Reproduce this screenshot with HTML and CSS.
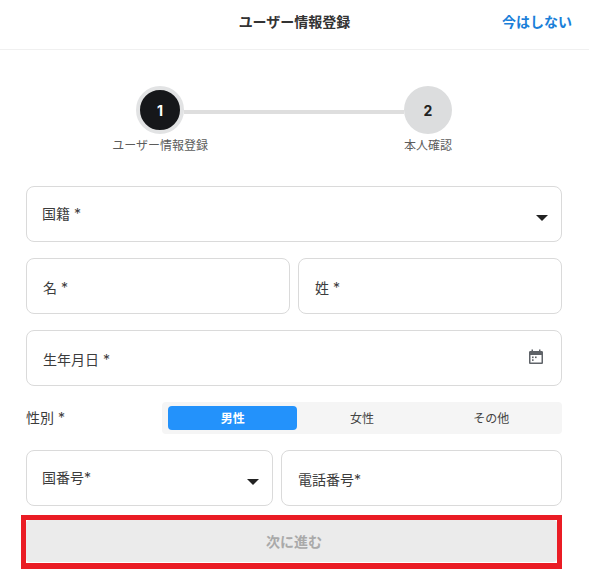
FILE: index.html
```html
<!DOCTYPE html>
<html lang="ja">
<head>
    <meta charset="UTF-8">
    <meta name="viewport" content="width=device-width, initial-scale=1.0">
    <title>ユーザー情報登録</title>
    <link rel="stylesheet" href="styles.css">
</head>
<body>
    <header class="topbar">
        <h1>ユーザー情報登録</h1>
        <a class="skip" href="#">今はしない</a>
    </header>

    <div class="stepper">
        <div class="step active">
            <span class="step-num">1</span>
            <span class="step-label">ユーザー情報登録</span>
        </div>
        <div class="step-line"></div>
        <div class="step">
            <span class="step-num">2</span>
            <span class="step-label">本人確認</span>
        </div>
    </div>

    <form class="form">
        <div class="field select">
            <span class="field-label">国籍 *</span>
            <span class="arrow"></span>
        </div>
        <div class="row names">
            <div class="field"><span class="field-label">名 *</span></div>
            <div class="field"><span class="field-label">姓 *</span></div>
        </div>
        <div class="field date">
            <span class="field-label">生年月日 *</span>
            <svg class="calendar" viewBox="0 0 16 16" width="16" height="16">
                <path fill="#5f6368" d="M3.5 0.5h1.5v1.5h6v-1.5h1.5v1.500h1.200c0.700 0 1.300 0.600 1.300 1.300v10.400c0 0.700-0.600 1.300-1.300 1.300H2.300c-0.700 0-1.300-0.600-1.300-1.300V3.300C1 2.600 1.600 2 2.300 2h1.200z"/>
                <rect x="2.500" y="6" width="11" height="7.500" fill="#fff"/>
                <rect x="4" y="7.500" width="1.600" height="1.600" fill="#5f6368"/>
                <rect x="7" y="7.500" width="1.600" height="1.600" fill="#5f6368"/>
                <rect x="4" y="10.300" width="1.600" height="1.600" fill="#5f6368"/>
            </svg>
        </div>
        <div class="gender">
            <span class="gender-label">性別 *</span>
            <div class="toggle">
                <button type="button" class="toggle-item on">男性</button>
                <button type="button" class="toggle-item">女性</button>
                <button type="button" class="toggle-item">その他</button>
            </div>
        </div>
        <div class="row phone">
            <div class="field select">
                <span class="field-label">国番号*</span>
                <span class="arrow"></span>
            </div>
            <div class="field tel"><span class="field-label">電話番号*</span></div>
        </div>
        <div class="next-frame">
            <button type="button" class="next" disabled>次に進む</button>
        </div>
    </form>
</body>
</html>
```

FILE: styles.css
```css
* {
    box-sizing: border-box;
}
body {
    margin: 0;
    background: #fff;
    color: #3c3c3c;
    font-family: Inter, "Noto Sans CJK JP", sans-serif;
    font-size: 14px;
}
.topbar {
    position: relative;
    height: 50px;
    padding: 0 17px 7px 0;
    display: flex;
    align-items: center;
    justify-content: flex-end;
    border-bottom: 1px solid #f0f0f0;
}
.topbar h1 {
    position: absolute;
    left: 0;
    right: 0;
    top: 12px;
    margin: 0;
    text-align: center;
    font-size: 14px;
    line-height: 20px;
    font-weight: 700;
    color: #333;
}
.skip {
    position: relative;
    color: #1a7fd9;
    font-weight: 700;
    text-decoration: none;
}
.stepper {
    display: flex;
    margin: 36px 0 0 136px;
    width: 316px;
}
.step {
    width: 48px;
    display: flex;
    flex-direction: column;
    align-items: center;
}
.step-num {
    width: 48px;
    height: 48px;
    border-radius: 50%;
    background: #dcddde;
    color: #222;
    font-size: 14px;
    font-weight: 700;
    display: flex;
    align-items: center;
    justify-content: center;
}
.step.active .step-num {
    background: #16171a;
    color: #fff;
    border: 4px solid #e2e3e4;
}
.step-label {
    margin-top: 3px;
    font-size: 12px;
    line-height: 18px;
    color: #5c5c5c;
    white-space: nowrap;
}
.step-line {
    flex: 1;
    height: 4px;
    margin-top: 24px;
    background: #dedede;
}
.form {
    margin: 31px 27px 0 26px;
    display: flex;
    flex-direction: column;
    gap: 16px;
}
.field {
    height: 56px;
    padding: 0 14px 0 16px;
    display: flex;
    align-items: center;
    justify-content: space-between;
    border: 1px solid #dadada;
    border-radius: 8px;
}
.field-label {
    line-height: 20px;
    margin-top: 4px;
}
.select {
    padding-left: 15px;
}
.select .field-label {
    margin-top: 0;
}
.arrow {
    width: 0;
    height: 0;
    margin-top: 8px;
    border-left: 6px solid transparent;
    border-right: 6px solid transparent;
    border-top: 6px solid #222;
    margin-right: -1px;
}
.row {
    display: flex;
    gap: 8px;
}
.row .field {
    flex: 1;
}
.row .select {
    flex: 0 0 247px;
}
.calendar {
    margin-right: 3px;
    margin-top: -3px;
}
.gender {
    display: flex;
    align-items: center;
}
.gender-label {
    width: 136px;
    margin-top: -2px;
}
.toggle {
    flex: 1;
    display: grid;
    grid-template-columns: repeat(3, 1fr);
    height: 32px;
    padding: 4px 6px;
    background: #f5f5f5;
    border-radius: 4px;
}
.toggle-item {
    padding: 0 0 2px;
    border: none;
    border-radius: 4px;
    background: none;
    color: #444;
    font: inherit;
    font-size: 12px;
}
.toggle-item.on {
    background: #2392fb;
    color: #fff;
    font-weight: 700;
}
.next-frame {
    margin: -7px 0 0 -5px;
    height: 54px;
    border: 5px solid #ea1c24;
    border-bottom-width: 6px;
    background: #fff;
}
.next {
    display: block;
    width: 100%;
    height: 42px;
    padding: 0 0 0 5px;
    border: none;
    border-radius: 4px;
    background: #ebebeb;
    color: #a9a9a9;
    font: inherit;
    font-size: 14px;
    font-weight: 700;
}
```
